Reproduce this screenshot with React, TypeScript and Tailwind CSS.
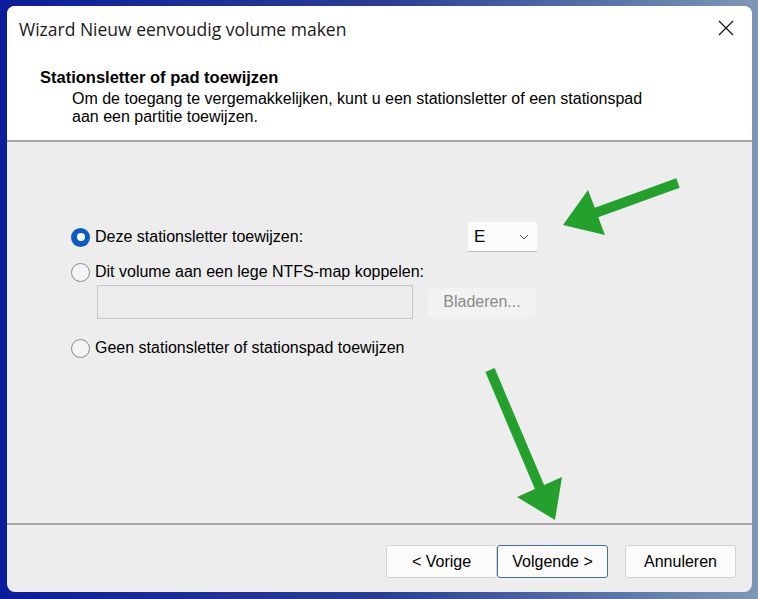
import React from "react";

function Radio({ checked }: { checked?: boolean }) {
  if (checked) {
    return (
      <span className="flex h-[19px] w-[19px] shrink-0 items-center justify-center rounded-full bg-[#0a5cc2]">
        <span className="h-[8px] w-[8px] rounded-full bg-white" />
      </span>
    );
  }
  return <span className="h-[19px] w-[19px] shrink-0 rounded-full border border-[#8a8a8a] bg-[#f4f4f4]" />;
}

function Arrows() {
  return (
    <svg className="pointer-events-none absolute inset-0" width="758" height="599" viewBox="0 0 758 599">
      <polygon
        fill="#24a02c"
        points="676.3,178.3 679.7,187.7 598.2,217.2 605,235 563,225 588,190 594.8,207.8"
      />
      <polygon
        fill="#24a02c"
        points="485.4,372 494.6,368 544.1,485 562,477 555,520 517,497 534.9,489"
      />
    </svg>
  );
}

export default function App() {
  return (
    <div
      className="relative h-[599px] w-[758px] overflow-hidden bg-gradient-to-r from-[#0b1c9c] via-[#2a3c94] to-[#7f97b6] pl-[7px] pt-[6px]"
      style={{ fontFamily: '"Liberation Sans", Arial, sans-serif' }}
    >
      <div className="flex h-[586px] w-[745px] flex-col overflow-hidden rounded-[8px] bg-[#ededed] text-black">
        {/* header */}
        <div className="flex h-[134px] flex-col bg-white">
          <div className="flex h-[46px] items-center justify-between pl-[12px] pr-[18px]">
            <span className="text-[17.5px] text-[#1a1a1a]" style={{ fontFamily: '"Open Sans", "Noto Sans", sans-serif' }}>
              Wizard Nieuw eenvoudig volume maken
            </span>
            <svg width="16" height="16" viewBox="0 0 16 16" className="mt-[-2px]">
              <path d="M1 1L15 15M15 1L1 15" stroke="#1a1a1a" strokeWidth="1.3" />
            </svg>
          </div>
          <div className="pl-[33px] pt-[16px] text-[16.5px] font-bold leading-[18px]">Stationsletter of pad toewijzen</div>
          <div className="pl-[65px] pt-[4px] text-[16px] leading-[18px]">
            Om de toegang te vergemakkelijken, kunt u een stationsletter of een stationspad
            <br />
            aan een partitie toewijzen.
          </div>
        </div>
        <div className="h-[2px] bg-[#a7a7a7]" />

        {/* body */}
        <div className="flex flex-1 flex-col pl-[64px] pt-[80px] text-[16px]">
          <div className="flex h-[30px] items-center">
            <Radio checked />
            <span className="ml-[5px] w-[373px]">Deze stationsletter toewijzen:</span>
            <div className="flex h-[30px] w-[69px] items-center justify-between border-b border-[#bcbcbc] bg-[#fbfbfb] pl-[6px] pr-[8px]">
              <span className="text-[17px]">E</span>
              <svg width="10" height="6" viewBox="0 0 10 6">
                <path d="M1 1L5 5L9 1" fill="none" stroke="#555" strokeWidth="1" />
              </svg>
            </div>
          </div>
          <div className="mt-[10px] flex h-[20px] items-center">
            <Radio />
            <span className="ml-[5px]">Dit volume aan een lege NTFS-map koppelen:</span>
          </div>
          <div className="ml-[26px] mt-[3px] flex items-center">
            <div className="h-[34px] w-[316px] border border-[#c6c6c6] bg-[#ececec]" />
            <div className="ml-[15px] flex h-[30px] w-[108px] items-center justify-center rounded-[3px] bg-[#f2f2f2] text-[#8a8a8a]">
              Bladeren...
            </div>
          </div>
          <div className="mt-[19px] flex h-[20px] items-center">
            <Radio />
            <span className="ml-[5px]">Geen stationsletter of stationspad toewijzen</span>
          </div>
        </div>

        <div className="h-[2px] bg-[#a7a7a7]" />
        {/* footer */}
        <div className="flex h-[67px] items-start justify-end pr-[16px] pt-[20px] text-[16px]">
          <div className="flex h-[33px] w-[111px] items-center justify-center rounded-[3px] border border-[#d2d2d2] bg-[#fbfbfb]">
            &lt; Vorige
          </div>
          <div className="flex h-[33px] w-[111px] items-center justify-center rounded-[3px] border border-[#3f6fb3] bg-[#fbfbfb]">
            Volgende &gt;
          </div>
          <div className="ml-[17px] flex h-[33px] w-[111px] items-center justify-center rounded-[3px] border border-[#d2d2d2] bg-[#fbfbfb]">
            Annuleren
          </div>
        </div>
      </div>
      <Arrows />
    </div>
  );
}
